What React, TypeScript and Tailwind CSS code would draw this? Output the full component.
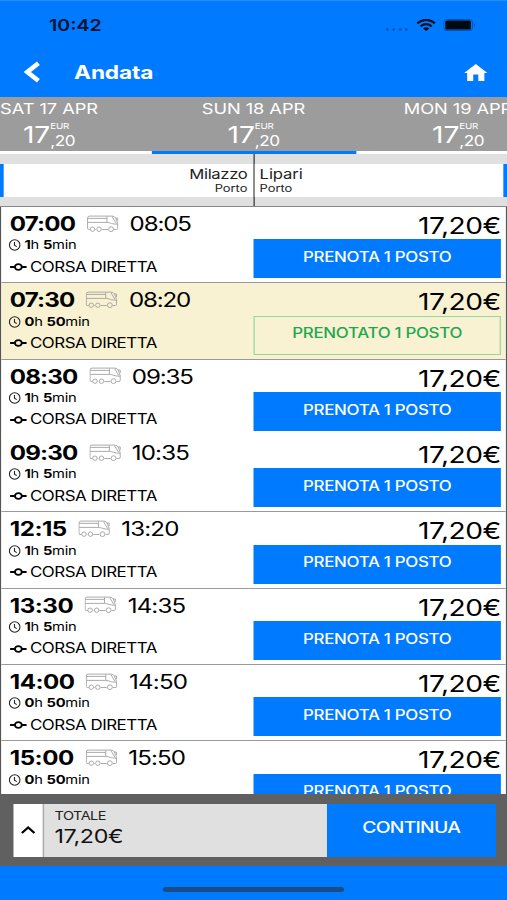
import { clsx } from 'clsx';

type Trip = {
  depart: string;
  arrive: string;
  hours: number;
  minutes: number;
  booked?: boolean;
  noLine?: boolean;
};

const trips: Trip[] = [
  { depart: '07:00', arrive: '08:05', hours: 1, minutes: 5 },
  { depart: '07:30', arrive: '08:20', hours: 0, minutes: 50, booked: true },
  { depart: '08:30', arrive: '09:35', hours: 1, minutes: 5, noLine: true },
  { depart: '09:30', arrive: '10:35', hours: 1, minutes: 5 },
  { depart: '12:15', arrive: '13:20', hours: 1, minutes: 5 },
  { depart: '13:30', arrive: '14:35', hours: 1, minutes: 5 },
  { depart: '14:00', arrive: '14:50', hours: 0, minutes: 50 },
  { depart: '15:00', arrive: '15:50', hours: 0, minutes: 50 },
];

const days = ['SAT 17 APR', 'SUN 18 APR', 'MON 19 APR'];

function BusIcon() {
  return (
    <svg className="w-[26px] h-[17px] shrink-0" viewBox="0 0 31 17" preserveAspectRatio="none" fill="none" stroke="#a3a3a3" strokeWidth="0.9">
      <path d="M3 14.5H1.6Q.6 14.5.6 13.3V3Q.6 1.1 2.6 1.1H24.5Q27 1.1 28 3L30 8.5V13.5Q30 14.5 28.8 14.5H26.5M20.5 14.5H14.6M8.6 14.5H8" />
      <path d="M.8 3.4H19.5M.8 7.4H19.5M19.5 1.4V7.4C23 7.6 24 9.2 29.8 9.2M24.5 1.6 28.6 8.6M27.8 3H30V6" />
      <circle cx="5.4" cy="14.2" r="2.2" />
      <circle cx="11.8" cy="14.2" r="2.2" />
      <circle cx="23.5" cy="14.2" r="2.4" />
    </svg>
  );
}

function ClockIcon() {
  return (
    <svg className="w-[10px] h-[12px] shrink-0" viewBox="0 0 12 12" preserveAspectRatio="none" fill="none" stroke="#222" strokeWidth="1.1">
      <circle cx="6" cy="6" r="5.2" />
      <path d="M5.8 3V6.2L8 7.6" />
    </svg>
  );
}

function DirectIcon() {
  return (
    <svg className="w-[14px] h-[8px] shrink-0" viewBox="0 0 17 8" preserveAspectRatio="none" fill="none" stroke="#000" strokeWidth="1.9">
      <path d="M.3 4H5.1M11.9 4H16.7" />
      <ellipse cx="8.5" cy="4" rx="3.4" ry="2.9" />
    </svg>
  );
}

function StatusBar() {
  return (
    <div className="flex h-[48px] items-center justify-between pl-[40px] pr-[25px]">
      <span className="text-[16px] font-semibold leading-none text-[#001230]">10:42</span>
      <div className="flex items-center">
        <svg className="mt-[8px] w-[18px] h-[3px]" viewBox="0 0 22 3" preserveAspectRatio="none" fill="#0055b8">
          <circle cx="1.5" cy="1.5" r="1.4" />
          <circle cx="8" cy="1.5" r="1.4" />
          <circle cx="14.5" cy="1.5" r="1.4" />
          <circle cx="20.5" cy="1.5" r="1.4" />
        </svg>
        <svg className="ml-[7.5px] w-[16px] h-[12px]" viewBox="0 0 20 12" preserveAspectRatio="none" fill="none" stroke="#001023">
          <path d="M1 4.2Q10-2.4 19 4.2" strokeWidth="2.3" />
          <path d="M4.2 7.3Q10 2.9 15.8 7.3" strokeWidth="2.1" />
          <path d="M10 12 6.8 9.4Q10 7 13.2 9.4Z" fill="#001023" stroke="none" />
        </svg>
        <svg className="ml-[6px] w-[27px] h-[12px]" viewBox="0 0 33 12" preserveAspectRatio="none">
          <rect x=".5" y=".5" width="28.5" height="11" rx="3" fill="none" stroke="#0055b0" />
          <rect x="2" y="1.5" width="25.5" height="9" rx="1.5" fill="#000810" />
          <path d="M30.5 4Q32.5 6 30.5 8Z" fill="#0055b0" />
        </svg>
      </div>
    </div>
  );
}

function DayTab({ label }: { label: string }) {
  return (
    <div className="flex w-[167px] shrink-0 flex-col items-center whitespace-nowrap text-white">
      <span className="pt-[1px] text-[14.9px] leading-[22px] tracking-[-0.05px]">{label}</span>
      <div className="flex h-[30px] items-center">
        <span className="text-[23px] leading-[30px]">17</span>
        <div className="flex flex-col">
          <span className="text-[8px] leading-[11px] tracking-[-0.2px]">EUR</span>
          <span className="text-[14px] leading-[18px] tracking-[-0.4px]">,20</span>
        </div>
      </div>
    </div>
  );
}

function TripRow({ trip }: { trip: Trip }) {
  return (
    <div
      className={clsx(
        'flex h-[76.35px] shrink-0 border-b pl-[5.5px] pr-[4px]',
        trip.booked ? 'bg-[#f8f2d2]' : 'bg-white',
        trip.noLine ? 'border-white' : 'border-[#999]',
      )}
    >
      <div className="flex w-[200.5px] shrink-0 flex-col pt-[6px] text-black">
        <div className="flex h-[23.5px] items-center pl-[1.5px]">
          <span
            className={clsx(
              'text-[19.7px] font-bold leading-none',
              trip.depart.startsWith('1') ? 'tracking-[-0.4px]' : 'tracking-[-0.7px]',
            )}
          >
            {trip.depart}
          </span>
          <span className="mr-[9px] ml-[9.5px] flex pb-[3px]"><BusIcon /></span>
          <span
            className={clsx(
              'text-[19.7px] leading-none',
              trip.arrive.startsWith('1') ? 'tracking-[-0.7px]' : 'tracking-[-0.95px]',
            )}
          >
            {trip.arrive}
          </span>
        </div>
        <div className="flex h-[17.5px] items-center gap-[3.5px] text-[12px] leading-none tracking-[-0.2px]">
          <ClockIcon />
          <span>
            <b>{trip.hours}</b>h <b>{trip.minutes}</b>min
          </span>
        </div>
        <div className="flex h-[27px] items-center gap-[3px] pl-[1px] text-[13.8px] leading-none tracking-[-0.4px]">
          <span className="flex pb-[1px]"><DirectIcon /></span>
          <span>CORSA DIRETTA</span>
        </div>
      </div>
      <div className="flex flex-1 flex-col">
        <div className="pt-[6px] text-right text-[23px] leading-[26.4px] tracking-[-0.4px] text-black">17,20€</div>
        <div
          className={clsx(
            'flex h-[39px] items-center justify-center pb-[2px] text-[13.8px] font-medium leading-none tracking-[-0.25px]',
            trip.booked ? 'border border-[#93d79f] text-[#1fa850]' : 'bg-[#007aff] text-white',
          )}
        >
          {trip.booked ? 'PRENOTATO 1 POSTO' : 'PRENOTA 1 POSTO'}
        </div>
      </div>
    </div>
  );
}

export default function App() {
  return (
    <div className="h-[900px] w-[507px] overflow-hidden">
      {/* 414pt wide phone layout, stretched to the full width */}
      <div className="flex h-[900px] w-[414px] origin-top-left scale-x-[1.22464] flex-col overflow-hidden bg-[#007aff] font-['Inter',sans-serif]">
        {/* Header */}
        <header className="h-[97px] shrink-0 border-t border-[#2a8cf5]">
          <StatusBar />
          <div className="flex h-[46px] items-center pl-[19px] pr-[16px] text-white">
            <svg className="w-[14px] h-[22px]" viewBox="0 0 17 22" preserveAspectRatio="none" fill="none" stroke="#fff" strokeWidth="4.6">
              <path d="M15 2.2 4 11 15 19.8" />
            </svg>
            <h1 className="ml-[27.5px] flex-1 text-[18.5px] font-bold leading-none tracking-[-0.1px]">Andata</h1>
            <svg className="w-[19px] h-[17px]" viewBox="0 0 23 17" preserveAspectRatio="none" fill="#fff">
              <path d="M11.5 0 23 9H20V17H14V10.5H9V17H3V9H0Z" />
            </svg>
          </div>
        </header>

        {/* Days */}
        <div className="flex h-[54px] shrink-0 justify-center overflow-hidden bg-[#9c9c9c]">
          {days.map((day) => (
            <DayTab key={day} label={day} />
          ))}
        </div>
        <div className="flex h-[3px] shrink-0 justify-center bg-white">
          <div className="w-[167px] bg-[#007aff]" />
        </div>

        {/* Stops */}
        <div className="flex h-[53px] shrink-0 items-stretch border-b border-[#888] bg-[#e0e0e0] text-[#222]">
          <div className="my-[9.5px] flex flex-1 flex-col items-end border-l-[3px] border-[#007aff] bg-white pr-[4.5px] pt-[1px]">
            <span className="text-[13.6px] leading-[18px] tracking-[-0.3px]">Milazzo</span>
            <span className="text-[10.5px] leading-[12px]">Porto</span>
          </div>
          <div className="w-px bg-[#333]" />
          <div className="my-[9.5px] flex flex-1 flex-col border-r-[3px] border-[#007aff] bg-white pl-[4.5px] pt-[1px]">
            <span className="text-[13.6px] leading-[18px] tracking-[-0.1px]">Lipari</span>
            <span className="text-[10.5px] leading-[12px]">Porto</span>
          </div>
        </div>

        {/* Trips */}
        <div className="flex h-[587px] shrink-0 flex-col overflow-hidden border-x border-[#555] bg-white">
          {trips.map((trip) => (
            <TripRow key={trip.depart} trip={trip} />
          ))}
        </div>

        {/* Total */}
        <div className="flex h-[72px] shrink-0 bg-[#606060] pb-[9px] pl-[10.5px] pr-[9px] pt-[9.5px]">
          <div className="flex w-[24px] items-center justify-center bg-white">
            <svg className="w-[12px] h-[8px]" viewBox="0 0 14 8" preserveAspectRatio="none" fill="none" stroke="#000" strokeWidth="2.2">
              <path d="M1 7 7 1.5 13 7" />
            </svg>
          </div>
          <div className="flex flex-1 flex-col border-l border-[#aaa] bg-[#e0e0e0] pl-[9px] pt-[4px]">
            <span className="text-[11.8px] leading-[17px] tracking-[-0.4px] text-[#222]">TOTALE</span>
            <span className="text-[19px] leading-[23px] tracking-[-0.3px] text-[#111]">17,20€</span>
          </div>
          <div className="flex w-[138.5px] items-center justify-center bg-[#007aff] pb-[5px] text-[15.8px] font-medium leading-none tracking-[-0.6px] text-white">
            CONTINUA
          </div>
        </div>

        {/* Home indicator */}
        <div className="flex flex-1 justify-center pt-[21px]">
          <div className="h-[5px] w-[148px] rounded-full bg-[#1b4d85]" />
        </div>
      </div>
    </div>
  );
}
